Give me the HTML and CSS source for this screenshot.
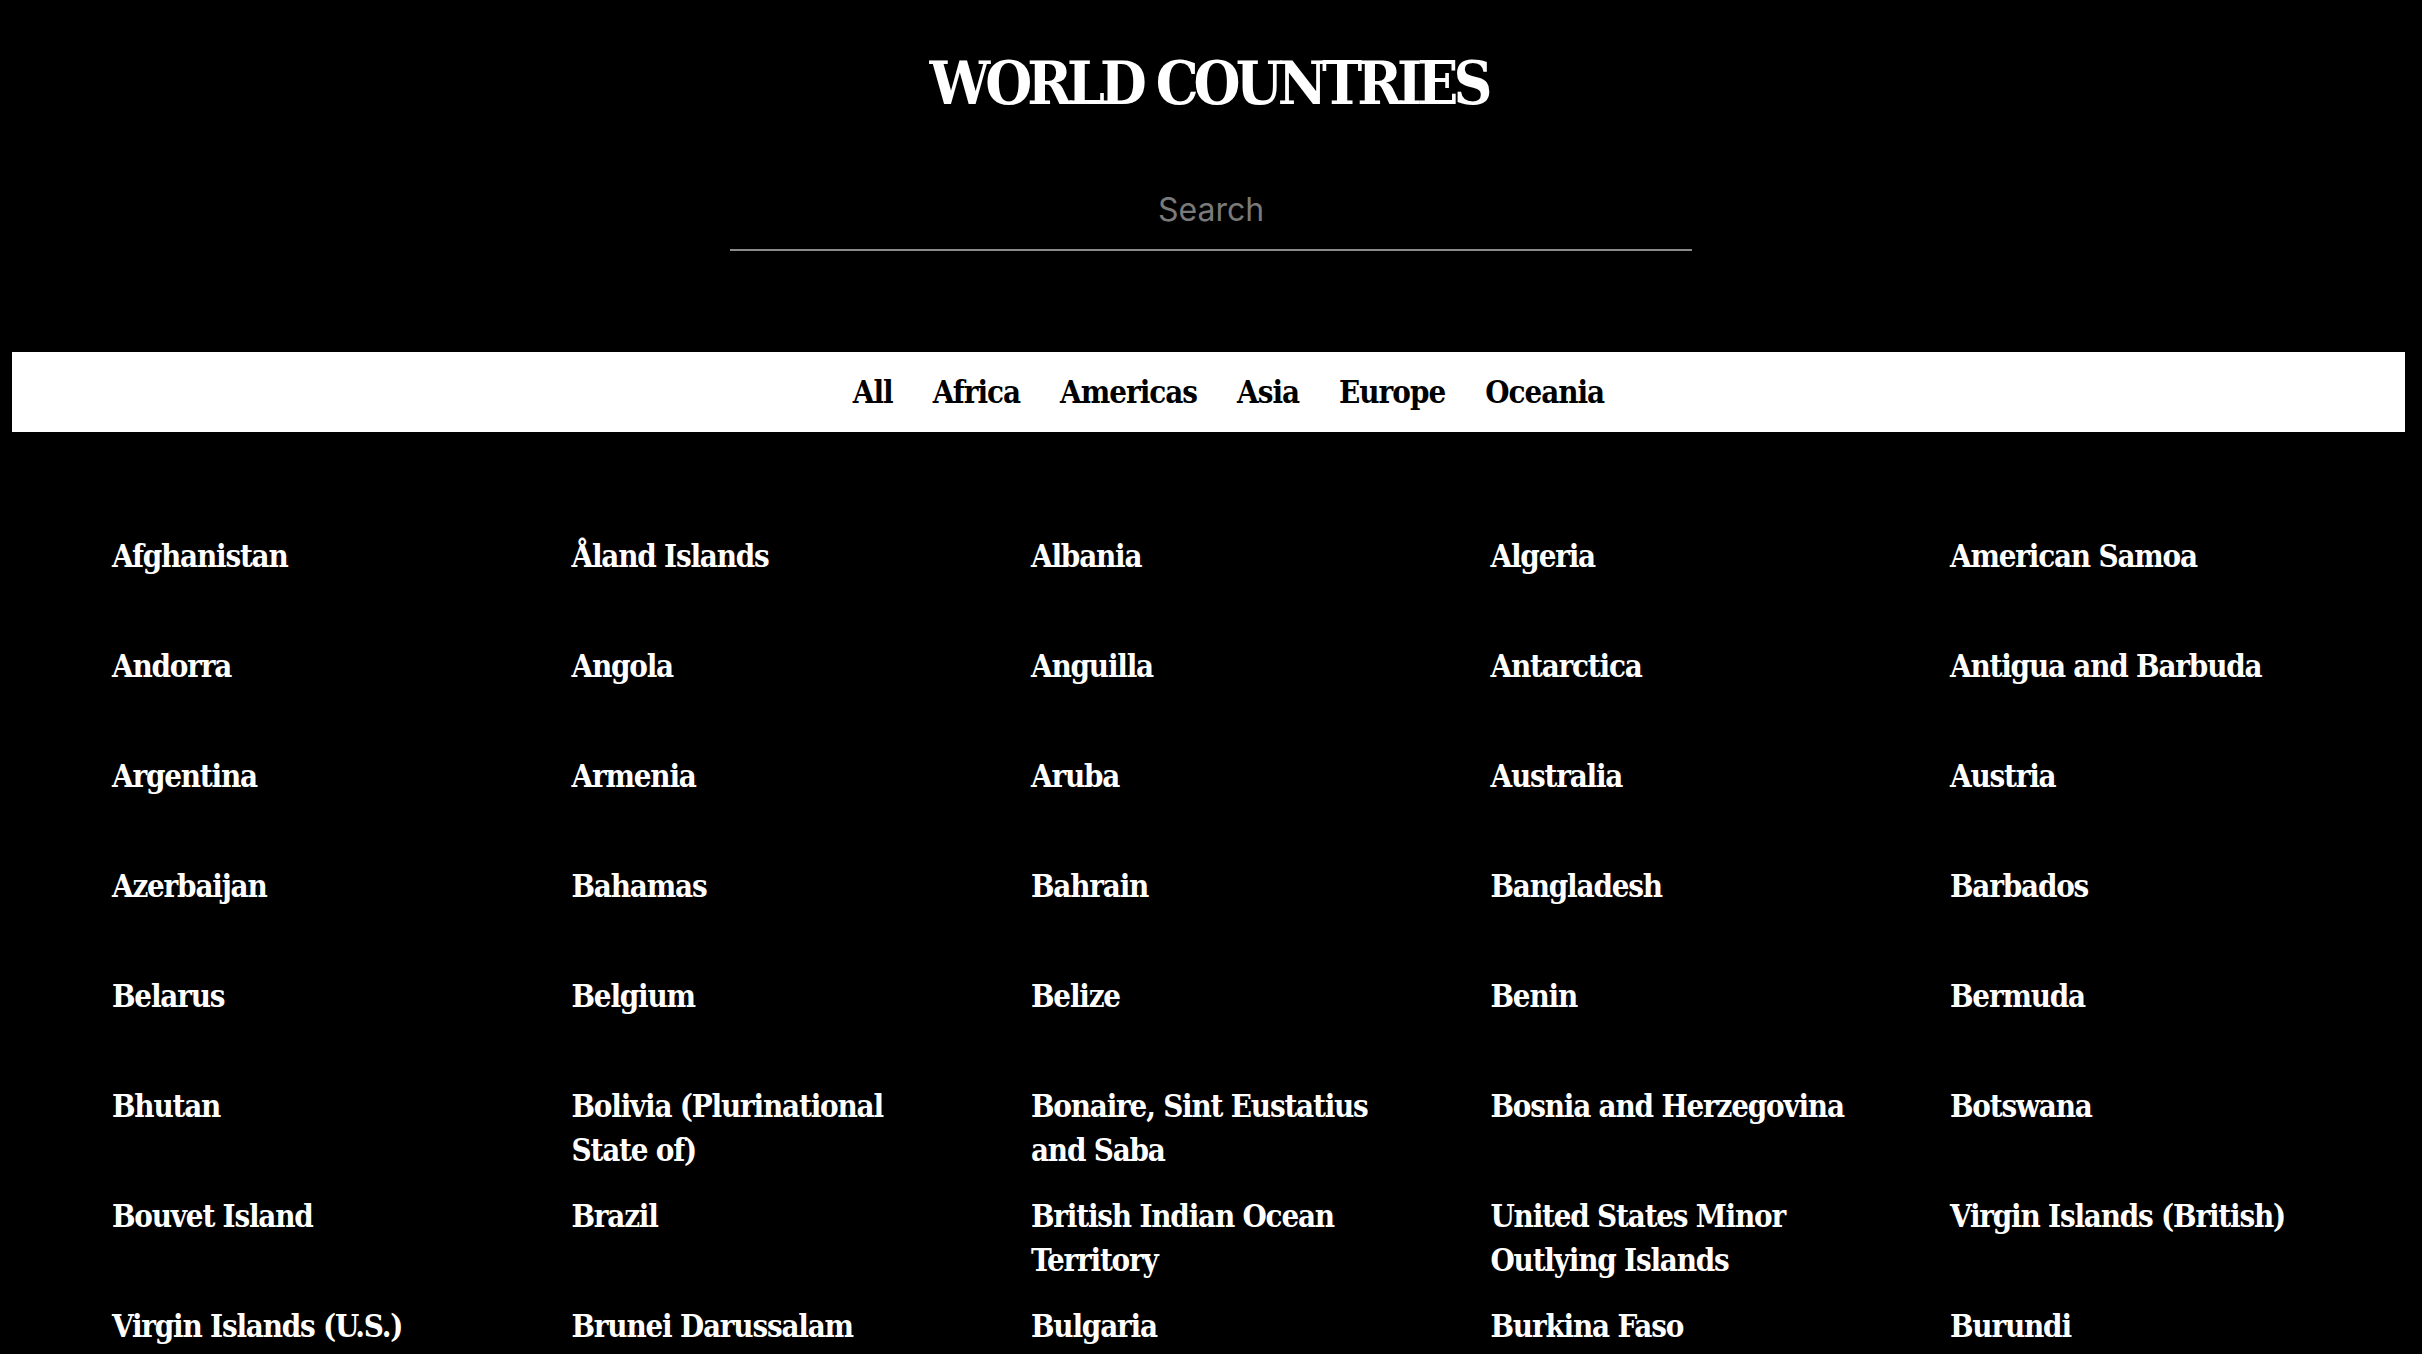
FILE: index.html
```html
<!DOCTYPE html>
<html lang="en">
<head>
<meta charset="utf-8">
<title>World Countries</title>
<link rel="stylesheet" href="styles.css">
</head>
<body>
  <header class="top">
    <h1 class="title">WORLD COUNTRIES</h1>
    <div class="search-wrap">
      <input class="search" type="text" placeholder="Search">
    </div>
  </header>
  <nav class="regions">
    <a class="region">All</a>
    <a class="region">Africa</a>
    <a class="region">Americas</a>
    <a class="region">Asia</a>
    <a class="region">Europe</a>
    <a class="region">Oceania</a>
  </nav>
  <main class="countries">
    <div class="country">Afghanistan</div>
    <div class="country">Åland Islands</div>
    <div class="country">Albania</div>
    <div class="country">Algeria</div>
    <div class="country">American Samoa</div>
    <div class="country">Andorra</div>
    <div class="country">Angola</div>
    <div class="country">Anguilla</div>
    <div class="country">Antarctica</div>
    <div class="country">Antigua and Barbuda</div>
    <div class="country">Argentina</div>
    <div class="country">Armenia</div>
    <div class="country">Aruba</div>
    <div class="country">Australia</div>
    <div class="country">Austria</div>
    <div class="country">Azerbaijan</div>
    <div class="country">Bahamas</div>
    <div class="country">Bahrain</div>
    <div class="country">Bangladesh</div>
    <div class="country">Barbados</div>
    <div class="country">Belarus</div>
    <div class="country">Belgium</div>
    <div class="country">Belize</div>
    <div class="country">Benin</div>
    <div class="country">Bermuda</div>
    <div class="country">Bhutan</div>
    <div class="country">Bolivia (Plurinational State of)</div>
    <div class="country">Bonaire, Sint Eustatius and Saba</div>
    <div class="country">Bosnia and Herzegovina</div>
    <div class="country">Botswana</div>
    <div class="country">Bouvet Island</div>
    <div class="country">Brazil</div>
    <div class="country">British Indian Ocean Territory</div>
    <div class="country">United States Minor Outlying Islands</div>
    <div class="country">Virgin Islands (British)</div>
    <div class="country">Virgin Islands (U.S.)</div>
    <div class="country">Brunei Darussalam</div>
    <div class="country">Bulgaria</div>
    <div class="country">Burkina Faso</div>
    <div class="country">Burundi</div>
  </main>
</body>
</html>
```
FILE: styles.css
```css
html {
  background: #000;
  overflow: hidden;
}
body {
  margin: 0 17px 0 12px;
  background: #000;
  color: #fff;
  font-family: "DejaVu Serif Condensed", "DejaVu Serif", serif;
}
.top {
  display: flex;
  flex-direction: column;
  align-items: center;
  padding-top: 48px;
}
.title {
  margin: 0;
  font-size: 60px;
  line-height: 70px;
  font-weight: 700;
  letter-spacing: -5px;
}
.search-wrap {
  margin-top: 64px;
  margin-left: 5px;
  width: 962px;
}
.search {
  display: block;
  width: 100%;
  box-sizing: border-box;
  background: transparent;
  border: 0;
  border-bottom: 2px solid #8a8a8a;
  outline: none;
  color: #fff;
  text-align: center;
  font-family: "Inter", "Roboto", sans-serif;
  font-size: 32px;
  padding: 8px 0 20px;
}
.search::placeholder {
  color: #7a7a7a;
}
.regions {
  margin-top: 101px;
  height: 80px;
  padding-left: 40px;
  background: #fff;
  display: flex;
  justify-content: center;
  align-items: center;
  gap: 40px;
}
.region {
  color: #000;
  font-size: 31px;
  font-weight: 700;
  letter-spacing: -1px;
}
.countries {
  display: grid;
  grid-template-columns: repeat(5, 459.5px);
  grid-auto-rows: 110px;
  padding-left: 100px;
  padding-top: 102px;
}
.country {
  max-width: 370px;
  font-size: 31px;
  line-height: 44px;
  font-weight: 700;
  letter-spacing: -1.2px;
}
```
